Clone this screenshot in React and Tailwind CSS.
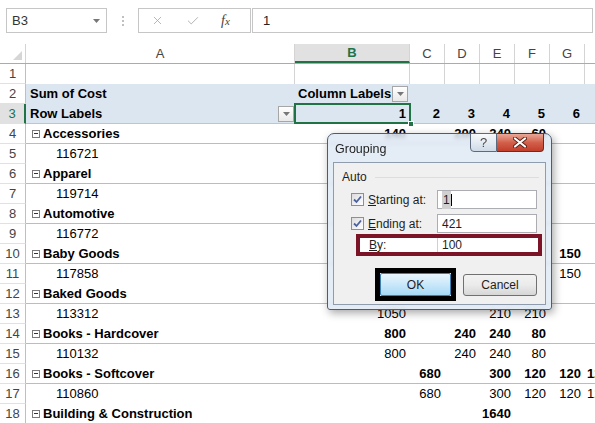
import { X, Check } from "lucide-react";

const NUM_COLS = [
  { key: "B", w: "w-[115px]" },
  { key: "C", w: "w-[35px]" },
  { key: "D", w: "w-[35px]" },
  { key: "E", w: "w-[35px]" },
  { key: "F", w: "w-[35px]" },
  { key: "G", w: "w-[35px]" },
  { key: "H", w: "w-[35px]" },
];

const ROWS = [
  { n: 4, label: "Accessories", cat: true, vals: { B: "140", D: "200", E: "240", F: "60" } },
  { n: 5, label: "116721" },
  { n: 6, label: "Apparel", cat: true },
  { n: 7, label: "119714" },
  { n: 8, label: "Automotive", cat: true },
  { n: 9, label: "116772" },
  { n: 10, label: "Baby Goods", cat: true, vals: { G: "150" } },
  { n: 11, label: "117858", vals: { G: "150" } },
  { n: 12, label: "Baked Goods", cat: true },
  { n: 13, label: "113312", vals: { B: "1050", E: "210", F: "210" } },
  { n: 14, label: "Books - Hardcover", cat: true, vals: { B: "800", D: "240", E: "240", F: "80" } },
  { n: 15, label: "110132", vals: { B: "800", D: "240", E: "240", F: "80" } },
  { n: 16, label: "Books - Softcover", cat: true, vals: { C: "680", E: "300", F: "120", G: "120", H: "1200" } },
  { n: 17, label: "110860", vals: { C: "680", E: "300", F: "120", G: "120", H: "1200" } },
  { n: 18, label: "Building & Construction", cat: true, vals: { E: "1640" } },
];

function Caret({ fill = "#6b6b6b" }) {
  return (
    <svg width="7" height="4" viewBox="0 0 7 4">
      <path d="M0 0h7L3.5 4z" fill={fill} />
    </svg>
  );
}

function FilterBtn() {
  return (
    <span className="flex h-[16px] w-[16px] shrink-0 items-center justify-center border border-[#a6a6a6] bg-linear-to-b from-white to-[#e9e9e9]">
      <Caret fill="#777" />
    </span>
  );
}

function RowNum({ n, active }) {
  return (
    <div
      className={`flex w-[26px] shrink-0 items-center justify-center border-b border-b-[#e1e1e1] font-normal ${
        active
          ? "border-r-2 border-r-[#217346] bg-[#e1e1e1] font-bold text-[#217346]"
          : "border-r border-r-[#bfbfbf] text-[#444]"
      }`}
    >
      {n}
    </div>
  );
}

function PivotRow({ n, label, cat, vals = {} }) {
  return (
    <div className={`flex h-[20px] shrink-0 ${cat ? "font-bold" : ""}`}>
      <RowNum n={n} />
      <div className={`flex flex-1 ${cat ? "border-b border-[#a9c0dc]" : ""}`}>
        <div className={`flex w-[269px] shrink-0 items-center ${cat ? "pl-[6px]" : "pl-[30px]"}`}>
          {cat && (
            <span className="mr-[3px] flex h-[8px] w-[8px] items-center justify-center border border-[#7a7a7a] bg-white">
              <span className="h-[1px] w-[4px] bg-[#333]" />
            </span>
          )}
          <span>{label}</span>
        </div>
        {NUM_COLS.map((c) => (
          <div key={c.key} className={`${c.w} shrink-0 flex items-center justify-end pr-[4px] whitespace-nowrap`}>
            {vals[c.key]}
          </div>
        ))}
      </div>
    </div>
  );
}

function CheckBox() {
  return (
    <span className="flex h-[13px] w-[13px] shrink-0 items-center justify-center border border-[#8e8f8f] bg-linear-to-br from-[#dcdcdc] to-white">
      <svg width="9" height="9" viewBox="0 0 9 9">
        <path d="M1 4.5 L3.5 7 L8 1.5" stroke="#4b61a0" strokeWidth="1.8" fill="none" />
      </svg>
    </span>
  );
}

function Field({ children, className = "" }) {
  return (
    <div className={`flex w-[100px] shrink-0 items-center border border-[#abadb3] bg-white pl-[4px] text-[12px] ${className}`}>
      {children}
    </div>
  );
}

function GroupingDialog() {
  return (
    <div className="absolute left-[327px] top-[133px] z-20 h-[177px] w-[225px] rounded-t-[7px] rounded-b-[3px] border border-[#4d5d70] bg-[#dde7f2]/80 shadow-[2px_3px_8px_rgba(0,0,0,0.35)] backdrop-blur-[2px] font-['Liberation_Sans',Arial,sans-serif] text-[12px] text-[#1e1e1e]">
      <div className="absolute left-[7px] top-[6px] text-[12.5px]">Grouping</div>

      <div className="absolute left-[142px] top-[-1px] flex">
        <div className="flex h-[19px] w-[27px] items-center justify-center rounded-bl-[4px] border border-[#5b6b7d] bg-linear-to-b from-white/80 to-[#c9d6e4]/80 text-[13px] text-[#4a4a4a]">
          ?
        </div>
        <div className="flex h-[19px] w-[47px] items-center justify-center rounded-br-[4px] border border-l-0 border-[#6b2a22] bg-linear-to-b from-[#e9a797] via-[#d2604b] to-[#c13d29]">
          <svg width="14" height="11" viewBox="0 0 14 11">
            <path d="M2 1.5 L12 9.5 M12 1.5 L2 9.5" stroke="#5a2219" strokeWidth="4" strokeLinecap="round" />
            <path d="M2 1.5 L12 9.5 M12 1.5 L2 9.5" stroke="#fff" strokeWidth="2.2" strokeLinecap="round" />
          </svg>
        </div>
      </div>

      <div className="absolute left-[5px] top-[28px] h-[143px] w-[213px] border border-[#8e9cad] bg-[#f0f0f0]">
        <div className="mt-[6px] flex h-[16px] items-center pl-[8px] pr-[6px]">
          <span>Auto</span>
          <span className="ml-[8px] h-[1px] flex-1 bg-[#d5dfe5]" />
        </div>

        <div className="mt-[5px] flex h-[19px] items-center">
          <div className="flex w-[103px] items-center pl-[17px]">
            <CheckBox />
            <span className="ml-[4px]">
              <u>S</u>tarting at:
            </span>
          </div>
          <Field className="h-[19px]">
            <span className="bg-[#d0d0d0] px-[1px]">1</span>
            <span className="h-[12px] w-[1px] bg-black" />
          </Field>
        </div>

        <div className="mt-[5px] flex h-[19px] items-center">
          <div className="flex w-[103px] items-center pl-[17px]">
            <CheckBox />
            <span className="ml-[4px]">
              <u>E</u>nding at:
            </span>
          </div>
          <Field className="h-[19px]">421</Field>
        </div>

        <div className="ml-[22px] mt-[1px] flex h-[22px] w-[186px] items-center border-4 border-[#7b1426] bg-white">
          <div className="w-[77px] shrink-0 pl-[9px]">
            <u>B</u>y:
          </div>
          <Field className="h-[14px] border-0 border-l border-[#d0d0d0]">100</Field>
        </div>

        <div className="ml-[41px] mt-[12px] flex items-center">
          <div className="flex h-[33px] w-[81px] items-center justify-center border-[5px] border-black">
            <div className="flex h-full w-full items-center justify-center rounded-[2px] border border-[#3c7fb1] bg-linear-to-b from-[#eaf6fd] to-[#a7d9f5]">
              OK
            </div>
          </div>
          <div className="ml-[7px] flex h-[22px] w-[74px] items-center justify-center rounded-[3px] border border-[#707070] bg-linear-to-b from-[#f2f2f2] via-[#ebebeb] to-[#d6d6d6]">
            Cancel
          </div>
        </div>
      </div>
    </div>
  );
}

export default function App() {
  return (
    <div className="relative h-[423px] w-[595px] overflow-hidden bg-white font-['Liberation_Sans',Arial,sans-serif] text-[13px] text-black">
      {/* formula bar */}
      <div className="flex h-[44px] items-start pl-[6px] pt-[8px]">
        <div className="flex h-[25px] w-[101px] shrink-0 items-center justify-between border border-[#c6c6c6] pl-[5px] pr-[6px] text-[#333]">
          <span>B3</span>
          <Caret fill="#777" />
        </div>
        <div className="flex h-[25px] w-[31px] shrink-0 flex-col items-center justify-center gap-[2px]">
          <span className="h-[2px] w-[2px] bg-[#c0c0c0]" />
          <span className="h-[2px] w-[2px] bg-[#c0c0c0]" />
          <span className="h-[2px] w-[2px] bg-[#c0c0c0]" />
        </div>
        <div className="flex h-[25px] w-[113px] shrink-0 items-center border border-[#c6c6c6] pl-[12px] text-[#a8a8a8]">
          <X size={13} strokeWidth={1.5} />
          <Check size={14} strokeWidth={1.5} className="ml-[22px]" />
          <span className="ml-[21px] font-['Liberation_Serif',serif] text-[14px] italic text-[#444]">
            f<span className="text-[11px]">x</span>
          </span>
        </div>
        <div className="ml-[1px] mr-[2px] flex h-[25px] flex-1 items-center border border-[#c6c6c6] pl-[10px] text-[#222]">
          1
        </div>
      </div>

      {/* column headers */}
      <div className="flex h-[20px] border-b border-[#ababab] text-[#444]">
        <div className="relative w-[26px] shrink-0 border-r border-[#d4d4d4]">
          <svg className="absolute bottom-[3px] right-[3px]" width="9" height="9" viewBox="0 0 9 9">
            <path d="M9 0V9H0z" fill="#d6d6d6" />
          </svg>
        </div>
        <div className="flex w-[269px] shrink-0 items-center justify-center border-r border-[#d4d4d4]">A</div>
        <div className="flex w-[115px] shrink-0 items-center justify-center border-b-2 border-r border-b-[#217346] border-r-[#d4d4d4] bg-[#e1e1e1] font-bold text-[#217346]">
          B
        </div>
        {["C", "D", "E", "F", "G"].map((c) => (
          <div key={c} className="flex w-[35px] shrink-0 items-center justify-center border-r border-[#d4d4d4]">
            {c}
          </div>
        ))}
        <div className="w-[35px] shrink-0 border-r border-[#d4d4d4]" />
      </div>

      {/* row 1 */}
      <div className="flex h-[20px]">
        <RowNum n={1} />
        <div className="w-[269px] shrink-0 border-r border-[#d4d4d4]" />
        {NUM_COLS.map((c) => (
          <div key={c.key} className={`${c.w} shrink-0 border-r border-[#d4d4d4]`} />
        ))}
      </div>

      {/* row 2 */}
      <div className="flex h-[20px] font-bold">
        <RowNum n={2} />
        <div className="flex flex-1 items-center bg-[#dce6f1]">
          <div className="w-[269px] shrink-0 pl-[4px]">Sum of Cost</div>
          <div className="flex w-[115px] shrink-0 items-center justify-between pl-[3px] pr-[2px]">
            <span>Column Labels</span>
            <FilterBtn />
          </div>
        </div>
      </div>

      {/* row 3 */}
      <div className="flex h-[20px] font-bold">
        <RowNum n={3} active />
        <div className="flex flex-1 border-b border-[#b4c7e0] bg-[#dce6f1]">
          <div className="flex w-[269px] shrink-0 items-center justify-between pl-[4px] pr-[1px]">
            <span>Row Labels</span>
            <FilterBtn />
          </div>
          <div className="relative z-10 flex w-[115px] shrink-0 items-center justify-end pr-[4px]">
            1
            <div className="absolute left-[-1px] top-[-1px] h-[21px] w-[117px] border-2 border-[#217346]" />
            <div className="absolute bottom-[-4px] right-[-4px] h-[6px] w-[6px] border border-white bg-[#217346]" />
          </div>
          {["2", "3", "4", "5", "6", ""].map((v, i) => (
            <div key={i} className="flex w-[35px] shrink-0 items-center justify-end pr-[5px]">
              {v}
            </div>
          ))}
        </div>
      </div>

      {ROWS.map((r) => (
        <PivotRow key={r.n} {...r} />
      ))}

      <GroupingDialog />
    </div>
  );
}
